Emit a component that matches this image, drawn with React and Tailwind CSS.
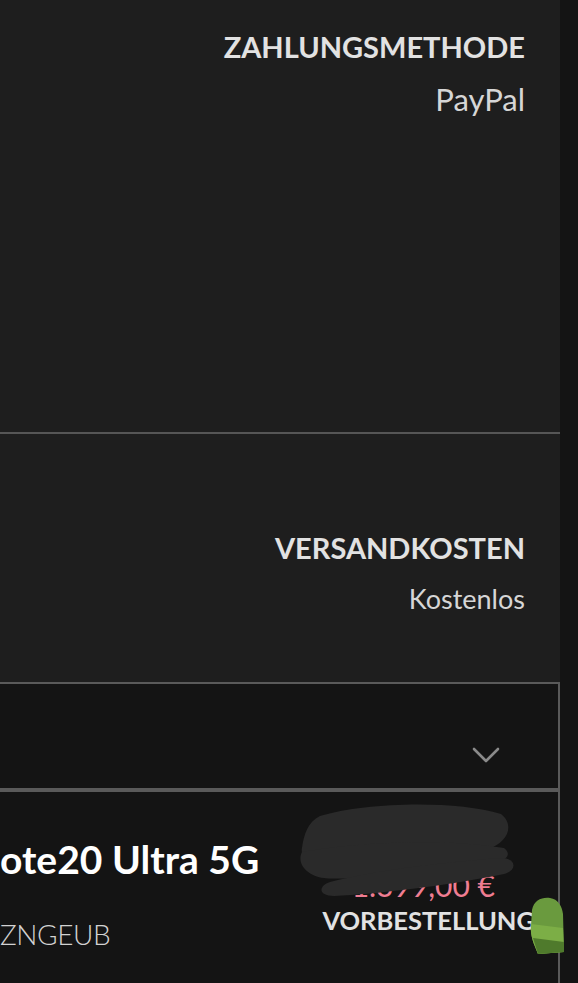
export default function App() {
	return (
		<div className="w-[578px] h-[983px] bg-[#141414] flex overflow-hidden" style={{ fontFamily: 'Lato, "Open Sans", sans-serif' }}>
			<div className="w-[560px] bg-[#1e1e1e] flex flex-col relative">
				{/* Zahlungsmethode */}
				<div className="h-[432px] flex flex-col items-end pr-[35px] pt-[27px]">
					<div className="text-[29px] font-bold text-[#e2e2e2] leading-[40px]">ZAHLUNGSMETHODE</div>
					<div className="text-[31px] text-[#d6d6d6] leading-[40px] mt-[12px]">PayPal</div>
				</div>
				<div className="h-[2px] bg-[#565656]" />

				{/* Versandkosten */}
				<div className="h-[248px] flex flex-col items-end pr-[35px] pt-[94px]">
					<div className="text-[29px] font-bold text-[#e2e2e2] leading-[40px]">VERSANDKOSTEN</div>
					<div className="text-[27px] text-[#d6d6d6] leading-[40px] mt-[11px]">Kostenlos</div>
				</div>

				{/* Bestellung Toggle */}
				<div className="h-[108px] bg-[#141414] border-t-2 border-r-2 border-b-2 border-[#5a5a5a] flex items-center justify-end pr-[58px] pt-[38px]">
					<svg width="28" height="18" viewBox="0 0 28 18" fill="none">
						<path d="M2 3 L14 15 L26 3" stroke="#8a8a8a" strokeWidth="2.6" strokeLinecap="round" strokeLinejoin="round" />
					</svg>
				</div>

				{/* Produkt */}
				<div className="flex-1 bg-[#141414] border-t-2 border-r-2 border-[#5a5a5a] flex justify-between">
					<div className="flex flex-col pt-[45px]">
						<div className="text-[39px] font-bold text-white leading-[44px]">ote20 Ultra 5G</div>
						<div className="text-[28px] font-light text-[#d2d2d2] leading-[40px] mt-[33px] tracking-[-0.4px]">ZNGEUB</div>
					</div>
					<div className="flex flex-col items-end pr-[23px] pt-[76px]">
						<div className="text-[30px] text-[#ef7d92] leading-[34px] pr-[40px]">1.399,00 €</div>
						<div className="text-[25.5px] font-bold text-[#e2e2e2] leading-[36px]">VORBESTELLUNG</div>
					</div>
				</div>

				{/* Schwärzungen */}
				<svg className="absolute left-[296px] top-[798px]" width="230" height="110" viewBox="0 0 230 110">
					<path d="M24 18 C 70 4, 160 2, 205 16 C 218 26, 214 44, 190 52 C 170 58, 120 62, 80 64 C 40 68, 2 66, 6 50 C 8 36, 12 24, 24 18 Z" fill="#2a2a2a" />
					<path d="M6 54 C 60 44, 150 40, 208 50 C 220 60, 205 68, 150 74 C 100 78, 40 82, 28 80 C 12 78, 0 66, 6 54 Z" fill="#2a2a2a" />
					<path d="M34 84 C 80 72, 150 64, 205 60 C 220 60, 222 72, 208 76 C 150 88, 80 96, 38 98 C 22 98, 22 88, 34 84 Z" fill="#2a2a2a" />
				</svg>
			</div>
			<svg className="absolute left-[528px] top-[896px]" width="40" height="60" viewBox="0 0 40 60">
				<path d="M4 14 C 6 4, 14 1, 22 2 C 30 3, 34 10, 35 18 L 36 56 L 10 58 C 6 48, 2 40, 3 30 Z" fill="#6a9a3e" />
				<path d="M3 28 L 35 32 L 36 56 L 10 58 C 6 48, 2 40, 3 30 Z" fill="#7cae46" />
				<path d="M5 42 L 36 46 L 36 56 L 10 58 Z" fill="#4f7a2c" />
			</svg>
		</div>
	)
}
